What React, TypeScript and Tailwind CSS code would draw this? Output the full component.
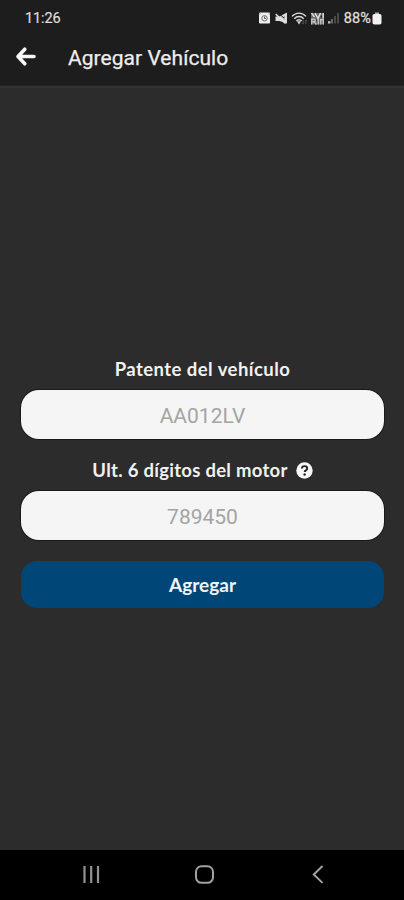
import type { ReactNode } from 'react'

function AlarmIcon() {
  return (
    <svg className="h-3 w-[13px]" viewBox="0 0 13 12" fill="none" aria-hidden>
      <rect x="1" y="0.5" width="11" height="11" rx="1" fill="#ededed" />
      <circle cx="6.5" cy="6.3" r="2.7" stroke="#666" strokeWidth="1" />
      <path d="M6.5 4.6v1.9h1.4" stroke="#444" strokeWidth="0.9" />
      <path d="M1 2.7 2.7 1M12 2.7 10.3 1" stroke="#777" strokeWidth="0.7" />
    </svg>
  )
}

function MuteIcon() {
  return (
    <svg className="h-3 w-[13px]" viewBox="0 0 13 12" fill="none" aria-hidden>
      <path d="M0.5 4.5h4L12 0.5v11L4.5 9h-4z" fill="#dcdcdc" />
      <path d="M3 1 9 6" stroke="#1d1d1d" strokeWidth="1" />
      <path d="M0.7 2 10.5 11.5" stroke="#e2e2e2" strokeWidth="1.5" />
      <path d="M9.4 4v3.5" stroke="#888" strokeWidth="0.8" />
    </svg>
  )
}

function WifiIcon() {
  return (
    <svg className="h-[13px] w-[17px]" viewBox="0 0 17 13" fill="none" aria-hidden>
      <path
        d="M1 4.4C5 0 11 0 15 4.4M3.3 6.8c2.7-3 6.7-3 9.4 0M5.4 9c1.4-1.7 3.8-1.7 5.2 0"
        stroke="#dadada"
        strokeWidth="1.4"
      />
      <path d="M6 9.2h4L8 12.5z" fill="#dadada" />
      <path d="M12.2 8v4M11 10.8l1.2 1.3M14.8 12V8m0 0 1.3 1.3" stroke="#555" strokeWidth="1" />
    </svg>
  )
}

function RoamingIcon() {
  return (
    <svg className="h-[13px] w-[15px]" viewBox="0 0 15 13" fill="none" aria-hidden>
      <rect x="1" y="1" width="13" height="11.5" fill="#666" />
      <path d="m1.5 1 3 4M5 1l3 5.5L10.5 1M13.2 1v5.5" stroke="#dedede" strokeWidth="1.5" />
      <path
        d="M1.7 12.5V7.2H4c1.8 0 1.8 2.5 0 2.5H1.7m2.3 0 2.5 2.8M8.3 7v5.5M10.7 12.5V7.7h2.6v4.8"
        stroke="#c0c0c0"
        strokeWidth="1.4"
      />
      <path d="M10.5 4.5 12 3v3zM6 8l1-1v3z" fill="#1d1d1d" />
    </svg>
  )
}

function SignalIcon() {
  return (
    <svg className="h-3 w-[13px]" viewBox="0 0 13 12" aria-hidden>
      <rect x="1" y="9.2" width="2.4" height="2.3" fill="#c6c6c6" />
      <rect x="4" y="7" width="2" height="4.5" fill="#686868" />
      <rect x="7" y="4" width="2" height="7.5" fill="#484848" />
      <rect x="10" y="1" width="2" height="10.5" fill="#484848" />
    </svg>
  )
}

function BatteryIcon() {
  return (
    <svg className="h-[13px] w-[10px]" viewBox="0 0 10 13" aria-hidden>
      <rect x="3" y="0.5" width="4" height="2.5" fill="#b5b5b5" />
      <rect x="0.5" y="2" width="9" height="10.5" rx="1.8" fill="#f2f2f2" />
    </svg>
  )
}

function StatusBar() {
  return (
    <div className="flex h-9 items-center pl-[25px] pr-[22px] text-[14.5px] text-[#dedede]">
      <span className="pt-px tracking-[-0.1px] [-webkit-text-stroke:0.2px_#dedede]">
        11:26
      </span>
      <div className="ml-auto flex items-center">
        <AlarmIcon />
        <span className="w-1" />
        <MuteIcon />
        <span className="w-[3px]" />
        <WifiIcon />
        <span className="w-[2px]" />
        <RoamingIcon />
        <span className="w-[2px]" />
        <SignalIcon />
        <span className="ml-1 mr-px pt-px tracking-[0.1px] [-webkit-text-stroke:0.3px_#dedede]">
          88%
        </span>
        <BatteryIcon />
      </div>
    </div>
  )
}

function Header() {
  return (
    <header className="flex h-[50px] items-start border-b border-[#252525] pl-[15px]">
      <button type="button" aria-label="Volver" className="mt-[10px]">
        <svg className="h-[21px] w-[21px]" viewBox="0 0 21 21" fill="none">
          <path
            d="M9.8 3.2 3 10.5l6.8 7.3M3.5 10.5H19"
            stroke="#f7f7f7"
            strokeWidth="3.6"
            strokeLinecap="round"
            strokeLinejoin="round"
          />
        </svg>
      </button>
      <h1 className="ml-8 mt-2 text-[21px] leading-7 tracking-[0.04px] text-[#ededed] [-webkit-text-stroke:0.25px_#ededed]">
        Agregar Vehículo
      </h1>
    </header>
  )
}

interface FieldProps {
  id: string
  label: string
  placeholder: string
  hint?: ReactNode
}

function Field({ id, label, placeholder, hint }: FieldProps) {
  return (
    <div className="flex flex-col">
      <div className="flex h-[21px] items-center justify-center gap-2">
        <label
          htmlFor={id}
          className={`font-[Lato,sans-serif] text-[18.5px] font-bold text-[#f1f1f1] ${hint ? 'tracking-[0.28px]' : 'tracking-[0.45px]'}`}
        >
          {label}
        </label>
        {hint}
      </div>
      <input
        id={id}
        placeholder={placeholder}
        className="mt-[10px] h-[49px] w-full rounded-[18px] bg-[#f5f5f5] pt-[3px] text-center text-[21px] text-gray-700 shadow-[0_0_0_1px_#191919] outline-none placeholder:text-[#a4a4a4]"
      />
    </div>
  )
}

function HelpIcon() {
  return (
    <svg className="h-[17px] w-[17px]" viewBox="0 0 17 17" fill="none" aria-hidden>
      <circle cx="8.5" cy="8.5" r="8.2" fill="#f7f7f7" />
      <path
        d="M5.9 6.5c.2-3.2 5.3-3 5.3 0 0 1.9-2.5 1.8-2.5 3.4"
        stroke="#242424"
        strokeWidth="1.9"
      />
      <circle cx="8.6" cy="12.5" r="1.2" fill="#242424" />
    </svg>
  )
}

function NavigationBar() {
  return (
    <nav className="flex h-[50px] items-center justify-between bg-black pl-[81px] pr-[76px]">
      <svg className="h-5 w-5" viewBox="0 0 20 20" aria-hidden>
        <path d="M3.5 1v17M10.2 1v17M17 1v17" stroke="#929292" strokeWidth="2.2" />
      </svg>
      <svg className="h-5 w-5" viewBox="0 0 20 20" fill="none" aria-hidden>
        <rect x="1" y="1.3" width="17" height="16.5" rx="5.5" stroke="#a2a2a2" strokeWidth="2" />
      </svg>
      <svg className="h-5 w-5" viewBox="0 0 20 20" fill="none" aria-hidden>
        <path d="M14.5 1 5.8 9.5l8.7 8.4" stroke="#a2a2a2" strokeWidth="2" />
      </svg>
    </nav>
  )
}

export default function App() {
  return (
    <div className="flex h-screen flex-col bg-[#2c2c2c] font-[Roboto,sans-serif]">
      <div className="bg-[#1d1d1d]">
        <StatusBar />
        <Header />
      </div>
      <main className="flex flex-1 flex-col border-t-2 border-[#323232] pl-[21px] pr-5 pt-[271px]">
        <Field id="plate" label="Patente del vehículo" placeholder="AA012LV" />
        <div className="mt-[21px]">
          <Field
            id="engine"
            label="Ult. 6 dígitos del motor"
            placeholder="789450"
            hint={<HelpIcon />}
          />
        </div>
        <button
          type="button"
          className="mt-[21px] h-[47px] rounded-[16px] bg-[#004777] pt-px font-[Lato,sans-serif] text-[19px] font-bold text-[#f1f4f7]"
        >
          Agregar
        </button>
      </main>
      <NavigationBar />
    </div>
  )
}
